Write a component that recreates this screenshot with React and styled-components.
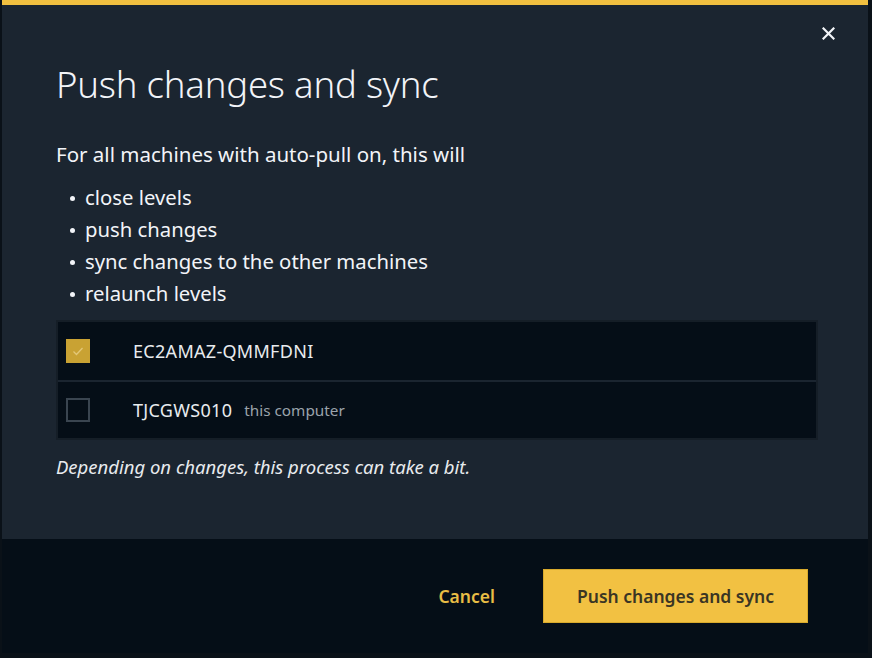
import React, { useState } from "react";
import styled, { createGlobalStyle } from "styled-components";

const GlobalStyle = createGlobalStyle`
  html, body {
    margin: 0;
    padding: 0;
    background: #0a1118;
  }
  * {
    box-sizing: border-box;
  }
`;

const Page = styled.div`
  width: 872px;
  height: 658px;
  padding: 0 4px 5px 2px;
  font-family: "Noto Sans", "Open Sans", sans-serif;
`;

const Dialog = styled.div`
  height: 100%;
  display: flex;
  flex-direction: column;
  background: #1b2530;
  border-top: 5px solid #f1c040;
  position: relative;
`;

const Body = styled.div`
  flex: 1;
  padding: 57px 50px 0 54px;
`;

const Close = styled.button`
  position: absolute;
  top: 16px;
  right: 28px;
  width: 24px;
  height: 24px;
  padding: 0;
  border: none;
  background: transparent;
  color: #f2f4f8;
  cursor: pointer;
  display: flex;
  align-items: center;
  justify-content: center;
`;

const Title = styled.h1`
  margin: 0;
  font-family: "Noto Sans", sans-serif;
  font-weight: 300;
  font-size: 36.5px;
  line-height: 44px;
  color: #f2f4f8;
  letter-spacing: -0.2px;
`;

const Lead = styled.p`
  margin: 35px 0 0;
  font-size: 20.5px;
  line-height: 26px;
  color: #f2f4f8;
`;

const Steps = styled.ul`
  margin: 14px 0 0;
  padding: 0 0 0 12px;
  list-style: none;
`;

const Step = styled.li`
  font-size: 20.3px;
  line-height: 32px;
  color: #f2f4f8;
  display: flex;
  align-items: center;

  &::before {
    content: "";
    width: 5px;
    height: 5px;
    border-radius: 50%;
    background: #f2f4f8;
    margin: 2px 10px 0 2px;
  }
`;

const Machines = styled.div`
  margin-top: 11px;
  border: 2px solid #151e27;
  background: #050e17;
`;

const Machine = styled.label`
  display: flex;
  align-items: center;
  height: 58px;
  padding-left: 8px;
  cursor: pointer;
  & + & {
    border-top: 2px solid #1b2530;
  }
`;

const Box = styled.span`
  width: 24px;
  height: 24px;
  flex: none;
  display: flex;
  align-items: center;
  justify-content: center;
  background: ${(p) => (p.checked ? "#c9a233" : "#050e17")};
  border: 2px solid ${(p) => (p.checked ? "#c9a233" : "#3a4550")};
`;

const Name = styled.span`
  margin-left: 43px;
  font-size: 18px;
  color: #e8ebee;
  letter-spacing: 0.3px;
`;

const Hint = styled.span`
  margin-left: 12px;
  font-size: 15.3px;
  color: #9ba3ab;
`;

const Note = styled.p`
  margin: 14px 0 0;
  font-size: 18.5px;
  line-height: 25px;
  font-style: italic;
  color: #e8ebee;
`;

const Footer = styled.div`
  height: 114px;
  flex: none;
  background: #050e17;
  display: flex;
  align-items: center;
  justify-content: flex-end;
  padding: 0 60px 0 0;
  gap: 48px;
`;

const TextButton = styled.button`
  border: none;
  background: transparent;
  padding: 0;
  font-family: inherit;
  font-size: 17.5px;
  font-weight: 600;
  color: #e8bd45;
  cursor: pointer;
`;

const PrimaryButton = styled.button`
  width: 265px;
  height: 54px;
  border: 1px solid #d9aa2c;
  background: #f2c142;
  font-family: inherit;
  font-size: 17.5px;
  font-weight: 600;
  color: #3a3524;
  cursor: pointer;
`;

const machines = [
  { id: "EC2AMAZ-QMMFDNI", checked: true },
  { id: "TJCGWS010", checked: false, hint: "this computer" },
];

const steps = [
  "close levels",
  "push changes",
  "sync changes to the other machines",
  "relaunch levels",
];

export default function App() {
  const [selected, setSelected] = useState(
    machines.map((m) => m.checked)
  );

  const toggle = (i) => () => {
    setSelected(selected.map((v, j) => (j === i ? !v : v)));
  };

  return (
    <Page>
      <GlobalStyle />
      <Dialog>
        <Close aria-label="Close">
          <svg width="13" height="13" viewBox="0 0 13 13">
            <path
              d="M1.5 1.5 L11.5 11.5 M11.5 1.5 L1.5 11.5"
              stroke="currentColor"
              strokeWidth="2.2"
              strokeLinecap="square"
            />
          </svg>
        </Close>
        <Body>
          <Title>Push changes and sync</Title>
          <Lead>For all machines with auto-pull on, this will</Lead>
          <Steps>
            {steps.map((s) => (
              <Step key={s}>{s}</Step>
            ))}
          </Steps>
          <Machines>
            {machines.map((m, i) => (
              <Machine key={m.id} onClick={toggle(i)}>
                <Box checked={selected[i]}>
                  {selected[i] && (
                    <svg width="14" height="14" viewBox="0 0 14 14">
                      <path
                        d="M2.5 7.5 L5.5 10.5 L11.5 4"
                        fill="none"
                        stroke="#e3c777"
                        strokeWidth="1.3"
                      />
                    </svg>
                  )}
                </Box>
                <Name>{m.id}</Name>
                {m.hint && <Hint>{m.hint}</Hint>}
              </Machine>
            ))}
          </Machines>
          <Note>Depending on changes, this process can take a bit.</Note>
        </Body>
        <Footer>
          <TextButton>Cancel</TextButton>
          <PrimaryButton>Push changes and sync</PrimaryButton>
        </Footer>
      </Dialog>
    </Page>
  );
}
